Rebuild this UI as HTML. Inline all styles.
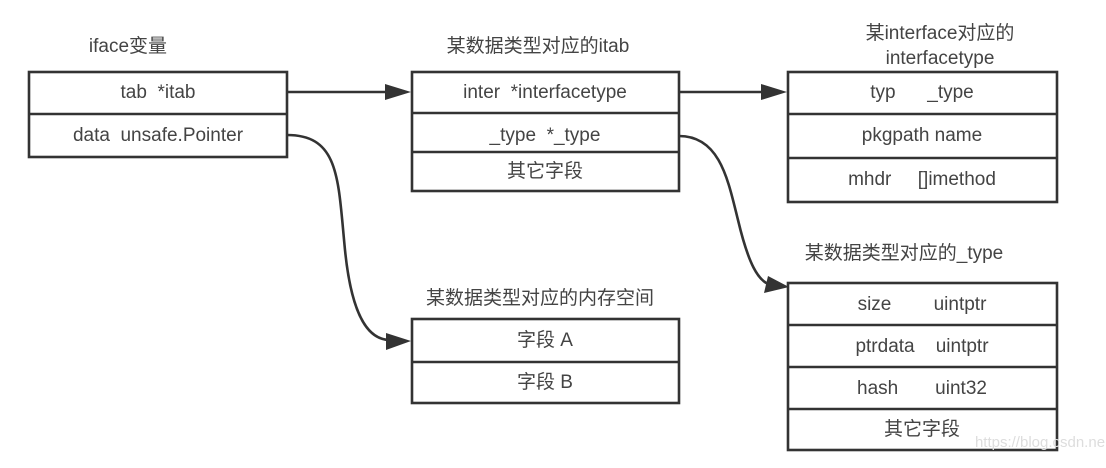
<!DOCTYPE html>
<html><head><meta charset="utf-8"><style>
html,body{margin:0;padding:0;background:#fff;width:1106px;height:468px;overflow:hidden}
svg text{font-family:"Liberation Sans","Noto Sans CJK SC",sans-serif;font-size:19px;fill:#444;text-anchor:middle;dominant-baseline:middle;white-space:pre}
</style></head><body>
<svg width="1106" height="468" viewBox="0 0 1106 468" xml:space="preserve">
<g fill="none" stroke="#333" stroke-width="2.6">
<rect x="29" y="72" width="258" height="85"/><line x1="29" y1="114" x2="287" y2="114"/>
<rect x="412" y="72" width="267" height="119"/><line x1="412" y1="113" x2="679" y2="113"/><line x1="412" y1="152" x2="679" y2="152"/>
<rect x="788" y="72" width="269" height="130"/><line x1="788" y1="114" x2="1057" y2="114"/><line x1="788" y1="158" x2="1057" y2="158"/>
<rect x="412" y="319" width="267" height="84"/><line x1="412" y1="362" x2="679" y2="362"/>
<rect x="788" y="283" width="269" height="167"/><line x1="788" y1="325" x2="1057" y2="325"/><line x1="788" y1="367" x2="1057" y2="367"/><line x1="788" y1="409" x2="1057" y2="409"/>
<line x1="287" y1="92" x2="385" y2="92"/>
<line x1="679" y1="92" x2="762" y2="92"/>
<path d="M287 135 C340 135 338 180 345 250 C352 320 370 340 390 340"/>
<path d="M679 136 C720 136 728 180 738 220 C748 262 758 283 772 285"/>
</g>
<g fill="#333">
<polygon points="411,92 385,84 385,100"/>
<polygon points="787,92 761,84 761,100"/>
<polygon points="411,341 386,333 386,350"/>
<polygon points="789,287 768,276 764,293"/>
</g>
<text x="128" y="47">iface变量</text>
<text x="158" y="93">tab  *itab</text>
<text x="158" y="136">data  unsafe.Pointer</text>
<text x="538" y="47">某数据类型对应的itab</text>
<text x="545" y="93">inter  *interfacetype</text>
<text x="545" y="136">_type  *_type</text>
<text x="545" y="172">其它字段</text>
<text x="940" y="34">某interface对应的</text>
<text x="940" y="59">interfacetype</text>
<text x="922" y="93">typ      _type</text>
<text x="922" y="136">pkgpath name</text>
<text x="922" y="180">mhdr     []imethod</text>
<text x="540" y="299">某数据类型对应的内存空间</text>
<text x="545" y="341">字段 A</text>
<text x="545" y="383">字段 B</text>
<text x="904" y="254">某数据类型对应的_type</text>
<text x="922" y="305">size        uintptr</text>
<text x="922" y="347">ptrdata    uintptr</text>
<text x="922" y="389">hash       uint32</text>
<text x="922" y="430">其它字段</text>
<text x="1040" y="443" style="fill:#ddd;font-size:15px">https://blog.csdn.ne</text>
</svg>
</body></html>
